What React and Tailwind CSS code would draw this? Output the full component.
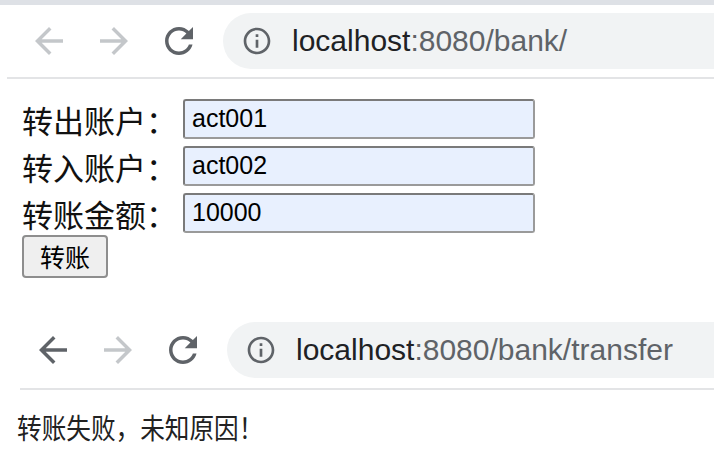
import React from "react";

const ICON = {
  back: "M20 11H7.83l5.59-5.59L12 4l-8 8 8 8 1.41-1.41L7.83 13H20v-2z",
  forward: "M12 4l-1.41 1.41L16.17 11H4v2h12.17l-5.58 5.59L12 20l8-8z",
  reload:
    "M17.65 6.35C16.2 4.9 14.21 4 12 4c-4.42 0-7.99 3.58-7.99 8s3.57 8 7.99 8c3.73 0 6.84-2.55 7.73-6h-2.08c-.82 2.33-3.04 4-5.65 4-3.31 0-6-2.69-6-6s2.69-6 6-6c1.66 0 3.140.69 4.22 1.78L13 11h7V4l-2.35 2.35z",
  info: "M11 7h2v2h-2zm0 4h2v6h-2zm1-9C6.48 2 2 6.48 2 12s4.48 10 10 10 10-4.48 10-10S17.52 2 12 2zm0 18c-4.41 0-8-3.59-8-8s3.59-8 8-8 8 3.59 8 8-3.59 8-8 8z",
};

function Icon({ name, className }) {
  return (
    <svg viewBox="0 0 24 24" className={className} fill="currentColor">
      <path d={ICON[name]} />
    </svg>
  );
}

function Toolbar({ path, backEnabled, className }) {
  return (
    <div className={"flex h-[56px] items-center gap-[23px] " + className}>
      <Icon
        name="back"
        className={"h-[42px] w-[42px] shrink-0 " + (backEnabled ? "text-[#5f6368]" : "text-[#c4c7ca]")}
      />
      <Icon name="forward" className="h-[42px] w-[42px] shrink-0 text-[#c4c7ca]" />
      <Icon name="reload" className="h-[42px] w-[42px] shrink-0 text-[#5f6368]" />
      <div className="flex h-full flex-1 items-center rounded-l-full bg-[#f1f3f4] pl-[18px]">
        <Icon name="info" className="h-[32px] w-[32px] shrink-0 text-[#5f6368]" />
        <span className="ml-[19px] whitespace-nowrap font-['Liberation_Sans',Arial,sans-serif] text-[30px] leading-none">
          <span className="text-[#202124]">localhost</span>
          <span className="text-[#5f6368]">:8080/bank/{path}</span>
        </span>
      </div>
    </div>
  );
}

function Field({ label, value }) {
  return (
    <div className="flex h-[40px] items-center">
      <span className="w-[161px] shrink-0 text-[31px] leading-none text-[#111]">{label}</span>
      <div className="flex h-[40px] w-[352px] items-center rounded-[3px] border-2 border-t-[#7a7a7a] border-l-[#7a7a7a] border-r-[#9a9a9a] border-b-[#9a9a9a] bg-[#e8f0fe] pl-[7px] font-['Liberation_Sans',Arial,sans-serif] text-[25px] text-black">
        {value}
      </div>
    </div>
  );
}

export default function App() {
  return (
    <div className="h-[468px] w-[714px] overflow-hidden bg-white font-['Noto_Sans_CJK_SC','Noto_Sans',sans-serif]">
      <div className="h-[5px] bg-[#dee1e6]" />
      <Toolbar path="" backEnabled={false} className="mt-[8px] pl-[28px]" />
      <div className="ml-[7px] mt-[8px] h-[2px] bg-[#e3e4e6]" />

      <div className="mt-[20px] flex flex-col gap-[7px] pl-[22px]">
        <Field label="转出账户：" value="act001" />
        <Field label="转入账户：" value="act002" />
        <Field label="转账金额：" value="10000" />
      </div>
      <button className="ml-[22px] mt-[2px] flex h-[43px] w-[86px] items-center justify-center rounded-[4px] border-2 border-[#8e8e8e] bg-[#efefef] text-[25px] leading-none text-black">
        转账
      </button>

      <Toolbar path="transfer" backEnabled className="mt-[44px] pl-[32px]" />
      <div className="ml-[20px] mt-[10px] h-[2px] bg-[#e3e4e6]" />

      <div className="mt-[23px] pl-[17px]">
        <span className="inline-block origin-left scale-x-[0.88] text-[28px] leading-none text-[#222]">
          转账失败，未知原因！
        </span>
      </div>
    </div>
  );
}
